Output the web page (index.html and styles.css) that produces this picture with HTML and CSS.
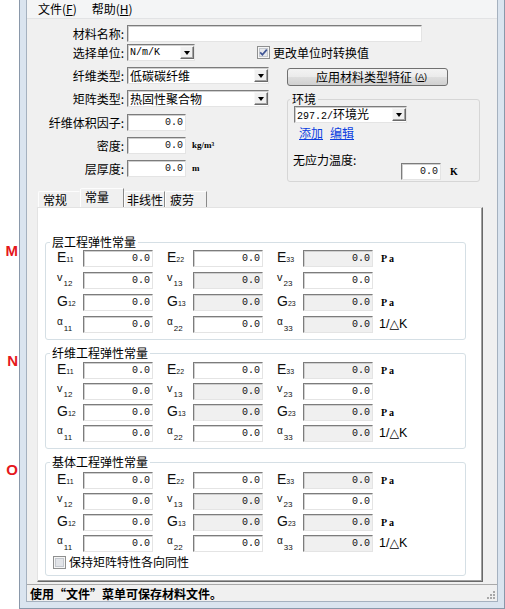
FILE: index.html
```html
<!DOCTYPE html>
<html>
<head>
<meta charset="utf-8">
<link rel="stylesheet" href="styles.css">
</head>
<body>
<div class="page">
  <div class="gutter">
    <div class="mark mark-m">M</div>
    <div class="mark mark-n">N</div>
    <div class="mark mark-o">O</div>
  </div>
  <div class="window">
    <div class="client">
      <div class="menubar">
        <span class="menu">文件(<u>F</u>)</span>
        <span class="menu">帮助(<u>H</u>)</span>
      </div>

      <div class="form">
        <div class="row">
          <span class="lbl">材料名称:</span>
          <div class="field w-name"></div>
        </div>
        <div class="row r2">
          <span class="lbl">选择单位:</span>
          <div class="select w-unit"><span class="mono">N/m/K</span><span class="drop"></span></div>
          <svg class="cb cb-unit" width="13" height="13" viewBox="0 0 13 13"><rect x="0.5" y="0.5" width="12" height="12" fill="#f6f6f6" stroke="#8e8f8f"/><rect x="2.5" y="2.5" width="8" height="8" fill="#e6e8ec" stroke="#c4c8ce"/><path d="M3.2 6.4 L5.4 8.8 L9.8 3.6" fill="none" stroke="#3f5595" stroke-width="1.7"/></svg>
          <span class="cb-text">更改单位时转换值</span>
        </div>

        <div class="split">
          <div class="leftcol">
            <div class="row">
              <span class="lbl">纤维类型:</span>
              <div class="select w-type"><span>低碳碳纤维</span><span class="drop"></span></div>
            </div>
            <div class="row">
              <span class="lbl">矩阵类型:</span>
              <div class="select w-type"><span>热固性聚合物</span><span class="drop"></span></div>
            </div>
            <div class="row r-vol">
              <span class="lbl">纤维体积因子:</span>
              <div class="field w-num num">0.0</div>
            </div>
            <div class="row">
              <span class="lbl">密度:</span>
              <div class="field w-num num">0.0</div>
              <span class="unit-s">kg/m³</span>
            </div>
            <div class="row">
              <span class="lbl">层厚度:</span>
              <div class="field w-num num">0.0</div>
              <span class="unit-s">m</span>
            </div>
          </div>

          <div class="rightcol">
            <button class="btn">应用材料类型特征<span class="acc">(<u>A</u>)</span></button>
            <fieldset class="env">
              <legend>环境</legend>
              <div class="env-body">
                <div class="select w-env"><span><span class="mono">297.2/</span>环境光</span><span class="drop"></span></div>
                <div class="links"><a class="link">添加</a><a class="link link2">编辑</a></div>
                <div class="temp">
                  <span class="temp-lbl">无应力温度:</span>
                  <div class="field w-temp num">0.0</div>
                  <span class="temp-unit">K</span>
                </div>
              </div>
            </fieldset>
          </div>
        </div>
      </div>

      <div class="tabs">
        <div class="tab t1">常规</div>
        <div class="tab t2 active">常量</div>
        <div class="tab t3">非线性</div>
        <div class="tab t4">疲劳</div>
      </div>

      <div class="panel">
        <fieldset class="grp grp-m">
          <legend>层工程弹性常量</legend>
          <div class="grp-body">
            <div class="crow">
              <span class="lab"><span class="big">E</span><span class="sb">11</span></span><div class="field cf num">0.0</div>
              <span class="lab"><span class="big">E</span><span class="sb">22</span></span><div class="field cf num">0.0</div>
              <span class="lab"><span class="big">E</span><span class="sb">33</span></span><div class="field cf num dis">0.0</div>
              <span class="unit-pa">Pa</span>
            </div>
            <div class="crow">
              <span class="lab"><span class="nu">v</span><span class="sb2">12</span></span><div class="field cf num">0.0</div>
              <span class="lab"><span class="nu">v</span><span class="sb2">13</span></span><div class="field cf num dis">0.0</div>
              <span class="lab"><span class="nu">v</span><span class="sb2">23</span></span><div class="field cf num">0.0</div>
            </div>
            <div class="crow">
              <span class="lab"><span class="big">G</span><span class="sb">12</span></span><div class="field cf num">0.0</div>
              <span class="lab"><span class="big">G</span><span class="sb">13</span></span><div class="field cf num dis">0.0</div>
              <span class="lab"><span class="big">G</span><span class="sb">23</span></span><div class="field cf num dis">0.0</div>
              <span class="unit-pa">Pa</span>
            </div>
            <div class="crow">
              <span class="lab"><span class="al">α</span><span class="sb2">11</span></span><div class="field cf num">0.0</div>
              <span class="lab"><span class="al">α</span><span class="sb2">22</span></span><div class="field cf num">0.0</div>
              <span class="lab"><span class="al">α</span><span class="sb2">33</span></span><div class="field cf num dis">0.0</div>
              <span class="unit-k">1/△K</span>
            </div>
          </div>
        </fieldset>

        <fieldset class="grp grp-n">
          <legend>纤维工程弹性常量</legend>
          <div class="grp-body">
            <div class="crow">
              <span class="lab"><span class="big">E</span><span class="sb">11</span></span><div class="field cf num">0.0</div>
              <span class="lab"><span class="big">E</span><span class="sb">22</span></span><div class="field cf num">0.0</div>
              <span class="lab"><span class="big">E</span><span class="sb">33</span></span><div class="field cf num dis">0.0</div>
              <span class="unit-pa">Pa</span>
            </div>
            <div class="crow">
              <span class="lab"><span class="nu">v</span><span class="sb2">12</span></span><div class="field cf num">0.0</div>
              <span class="lab"><span class="nu">v</span><span class="sb2">13</span></span><div class="field cf num dis">0.0</div>
              <span class="lab"><span class="nu">v</span><span class="sb2">23</span></span><div class="field cf num">0.0</div>
            </div>
            <div class="crow">
              <span class="lab"><span class="big">G</span><span class="sb">12</span></span><div class="field cf num">0.0</div>
              <span class="lab"><span class="big">G</span><span class="sb">13</span></span><div class="field cf num dis">0.0</div>
              <span class="lab"><span class="big">G</span><span class="sb">23</span></span><div class="field cf num dis">0.0</div>
              <span class="unit-pa">Pa</span>
            </div>
            <div class="crow">
              <span class="lab"><span class="al">α</span><span class="sb2">11</span></span><div class="field cf num">0.0</div>
              <span class="lab"><span class="al">α</span><span class="sb2">22</span></span><div class="field cf num">0.0</div>
              <span class="lab"><span class="al">α</span><span class="sb2">33</span></span><div class="field cf num dis">0.0</div>
              <span class="unit-k">1/△K</span>
            </div>
          </div>
        </fieldset>

        <fieldset class="grp grp-o">
          <legend>基体工程弹性常量</legend>
          <div class="grp-body">
            <div class="crow">
              <span class="lab"><span class="big">E</span><span class="sb">11</span></span><div class="field cf num">0.0</div>
              <span class="lab"><span class="big">E</span><span class="sb">22</span></span><div class="field cf num">0.0</div>
              <span class="lab"><span class="big">E</span><span class="sb">33</span></span><div class="field cf num dis">0.0</div>
              <span class="unit-pa">Pa</span>
            </div>
            <div class="crow">
              <span class="lab"><span class="nu">v</span><span class="sb2">12</span></span><div class="field cf num">0.0</div>
              <span class="lab"><span class="nu">v</span><span class="sb2">13</span></span><div class="field cf num dis">0.0</div>
              <span class="lab"><span class="nu">v</span><span class="sb2">23</span></span><div class="field cf num">0.0</div>
            </div>
            <div class="crow">
              <span class="lab"><span class="big">G</span><span class="sb">12</span></span><div class="field cf num">0.0</div>
              <span class="lab"><span class="big">G</span><span class="sb">13</span></span><div class="field cf num dis">0.0</div>
              <span class="lab"><span class="big">G</span><span class="sb">23</span></span><div class="field cf num dis">0.0</div>
              <span class="unit-pa">Pa</span>
            </div>
            <div class="crow">
              <span class="lab"><span class="al">α</span><span class="sb2">11</span></span><div class="field cf num">0.0</div>
              <span class="lab"><span class="al">α</span><span class="sb2">22</span></span><div class="field cf num">0.0</div>
              <span class="lab"><span class="al">α</span><span class="sb2">33</span></span><div class="field cf num dis">0.0</div>
              <span class="unit-k">1/△K</span>
            </div>
            <div class="iso">
              <svg class="cb" width="13" height="13" viewBox="0 0 13 13"><rect x="0.5" y="0.5" width="12" height="12" fill="#f6f6f6" stroke="#8e8f8f"/><rect x="2.5" y="2.5" width="8" height="8" fill="#e2e4e8" stroke="#c4c8ce"/></svg>
              <span class="iso-text">保持矩阵特性各向同性</span>
            </div>
          </div>
        </fieldset>
      </div>

      <div class="status">
        <span class="status-text">使用“文件”菜单可保存材料文件。</span>
        <svg class="grip" width="10" height="10" viewBox="0 0 10 10">
          <rect x="7" y="1" width="2" height="2" fill="#a8a8a8"/>
          <rect x="4" y="4" width="2" height="2" fill="#a8a8a8"/>
          <rect x="7" y="4" width="2" height="2" fill="#a8a8a8"/>
          <rect x="1" y="7" width="2" height="2" fill="#a8a8a8"/>
          <rect x="4" y="7" width="2" height="2" fill="#a8a8a8"/>
          <rect x="7" y="7" width="2" height="2" fill="#a8a8a8"/>
        </svg>
      </div>
    </div>
  </div>
</div>
</body>
</html>
```

FILE: styles.css
```css
* { box-sizing: border-box; }
html, body { margin: 0; padding: 0; }
body {
  width: 505px;
  height: 609px;
  overflow: hidden;
  background: #fff;
  font-family: "Noto Sans CJK SC", "Liberation Sans", sans-serif;
  font-size: 12px;
  color: #000;
}
.page { display: flex; height: 609px; }

.gutter {
  width: 19px;
  flex: none;
  display: flex;
  flex-direction: column;
  align-items: flex-end;
  padding-right: 1px;
}
.mark {
  font-family: "Liberation Sans", Arial, sans-serif;
  font-weight: bold;
  font-size: 15px;
  line-height: 15px;
  color: #e5171c;
}
.mark-m { margin-top: 243px; }
.mark-n { margin-top: 95px; }
.mark-o { margin-top: 94px; }

.window {
  width: 486px;
  height: 609px;
  flex: none;
  background: #dae4ef;
  border: 1px solid #8a98aa;
  border-top: none;
  padding: 0 6px 6px;
}
.client {
  height: 602px;
  border: 1px solid #a5b1bf;
  border-top: none;
  background: #f0f0f0;
  display: flex;
  flex-direction: column;
}

/* menu */
.menubar {
  height: 19px;
  flex: none;
  display: flex;
  align-items: center;
  gap: 15px;
  padding-left: 11px;
  background: #f4f5f6;
  border-bottom: 1px solid #e2e3e5;
  line-height: 18px;
}

/* form */
.form { padding-top: 6px; flex: none; }
.row { display: flex; align-items: center; height: 17px; }
.r2 { margin-top: 2px; }
.lbl {
  width: 97px;
  flex: none;
  margin-right: 3px;
  text-align: right;
  line-height: 17px;
  white-space: nowrap;
}
.field {
  height: 17px;
  flex: none;
  background: #fff;
  border: 1px solid;
  border-color: #7c7c7c #e4e4e4 #e4e4e4 #7c7c7c;
  box-shadow: inset 1px 1px 0 #cfcfcf;
}
.num {
  display: flex;
  align-items: center;
  justify-content: flex-end;
  padding-right: 2px;
  font-family: "Liberation Mono", monospace;
  font-size: 10px;
  line-height: 15px;
  color: #111;
}
.dis { background: #f0f0f0; }
.w-name { width: 295px; }
.w-num { width: 59px; }
.w-temp { width: 40px; }

.select {
  height: 17px;
  flex: none;
  display: flex;
  align-items: center;
  justify-content: space-between;
  padding-left: 2px;
  background: #fff;
  border: 1px solid;
  border-color: #7c7c7c #e4e4e4 #e4e4e4 #7c7c7c;
  box-shadow: inset 1px 1px 0 #cfcfcf;
  line-height: 15px;
  white-space: nowrap;
}
.w-unit { width: 68px; }
.w-type { width: 142px; }
.w-env { width: 113px; }
.mono { font-family: "Liberation Mono", monospace; font-size: 10px; }
.drop {
  width: 14px;
  height: 13px;
  flex: none;
  display: flex;
  align-items: center;
  justify-content: center;
  background: #f0f0f0;
  border: 1px solid;
  border-color: #f8f8f8 #6a6a6a #6a6a6a #f8f8f8;
  box-shadow: inset -1px -1px 0 #a3a3a3;
}
.drop::after {
  content: "";
  width: 0;
  height: 0;
  border-left: 3.5px solid transparent;
  border-right: 3.5px solid transparent;
  border-top: 4px solid #000;
}

.cb { flex: none; display: block; }
.cb-unit { margin-left: 62px; }
.cb-text { margin-left: 3px; line-height: 17px; white-space: nowrap; }

.unit-s {
  margin-left: 6px;
  font-family: "Liberation Serif", serif;
  font-weight: bold;
  font-size: 9px;
  line-height: 17px;
}

.split { display: flex; margin-top: 6px; }
.leftcol {
  width: 260px;
  flex: none;
  display: flex;
  flex-direction: column;
  gap: 6px;
}
.r-vol { margin-top: 1px; }
.rightcol { width: 193px; flex: none; }

.btn {
  display: flex;
  align-items: center;
  justify-content: center;
  width: 161px;
  height: 18px;
  margin: 1px 0 0;
  padding: 0 0 0 8px;
  border: 1px solid #707070;
  border-radius: 3px;
  background: linear-gradient(#f3f3f3 0%, #ebebeb 48%, #dedede 52%, #d0d0d0 100%);
  font-family: "Noto Sans CJK SC", sans-serif;
  font-size: 12px;
  line-height: 16px;
  color: #000;
}
.acc {
  margin-left: 3px;
  font-family: "Liberation Sans", sans-serif;
  font-size: 9px;
}

.env {
  width: 193px;
  margin: 6px 0 0;
  padding: 0;
  min-inline-size: 0;
  border: 1px solid #d6d6d6;
  border-radius: 3px;
}
.env legend {
  padding: 0 2px;
  margin-left: 2px;
  line-height: 14px;
}
.env-body { padding: 0 6px 1px 6px; }
.links { display: flex; margin-top: 3px; line-height: 14px; }
.link { color: #0b3ee0; text-decoration: underline; margin-left: 5px; }
.link2 { margin-left: 7px; }
.temp { display: flex; align-items: flex-start; margin-top: 13px; }
.temp-lbl { width: 107px; flex: none; margin-left: -1px; line-height: 14px; white-space: nowrap; }
.w-temp { margin-top: 10px; margin-left: 1px; }
.temp-unit {
  margin-top: 10px;
  margin-left: 9px;
  font-family: "Liberation Serif", serif;
  font-weight: bold;
  font-size: 10px;
  line-height: 17px;
}

/* tabs */
.tabs {
  display: flex;
  align-items: flex-end;
  height: 19px;
  margin: 6px 0 0 11px;
  flex: none;
}
.tab {
  height: 16px;
  padding-left: 4px;
  line-height: 15px;
  border-top: 1px solid #fdfdfd;
  border-left: 1px solid #fdfdfd;
  border-right: 1px solid #8a8a8a;
  border-top-left-radius: 2px;
  white-space: nowrap;
}
.t1 { width: 42px; border-right-color: transparent; }
.t2 { width: 44px; }
.t3 { width: 41px; padding-left: 2px; }
.t4 { width: 42px; }
.tab.active {
  height: 19px;
  line-height: 16px;
  padding-left: 4px;
  border-left-color: #ffffff;
}

/* panel */
.panel {
  margin-left: 10px;
  width: 446px;
  height: 375px;
  flex: none;
  background: #fff;
  border: 1px solid;
  border-color: #e3e3e3 #696969 #696969 #e3e3e3;
  box-shadow: inset -1px -1px 0 #a0a0a0;
  padding: 27px 0 0 7px;
}
.grp {
  width: 421px;
  margin: 0;
  padding: 0;
  min-inline-size: 0;
  border: 1px solid #d5dfe5;
  border-radius: 3px;
}
.grp legend {
  padding: 0 2px;
  margin-left: 4px;
  line-height: 14px;
}
.grp-body {
  display: flex;
  flex-direction: column;
  gap: 4px;
  padding: 0 0 6px 11px;
}
.grp-m .grp-body { gap: 5px; padding-top: 1px; }
.grp-n { margin-top: 6px; }
.grp-n .grp-body { padding-top: 2px; }
.grp-o { margin-top: 6px; }
.grp-o .grp-body { padding-top: 3px; }

.crow { display: flex; align-items: center; height: 17px; }
.cf { width: 70px; }
.lab {
  width: 26px;
  flex: none;
  margin-left: 14px;
  font-family: "Liberation Sans", Arial, sans-serif;
  font-size: 14px;
  line-height: 17px;
  white-space: nowrap;
  color: #111;
}
.lab:first-child { margin-left: 0; }
.big { font-size: 14px; }
.sb { font-size: 7px; }
.nu { font-size: 11px; vertical-align: 5px; }
.al { font-size: 10px; vertical-align: 6px; }
.sb2 { font-size: 8px; margin-left: 1px; }
.unit-pa {
  margin-left: 8px;
  font-family: "Liberation Serif", serif;
  font-weight: bold;
  font-size: 10px;
  letter-spacing: 2px;
  line-height: 17px;
}
.unit-k {
  margin-left: 6px;
  font-family: "Liberation Sans", "DejaVu Sans", sans-serif;
  font-size: 12.5px;
  line-height: 17px;
  white-space: nowrap;
}
.iso {
  display: flex;
  align-items: center;
  height: 14px;
  margin-top: -1px;
  margin-left: -4px;
}
.iso-text { margin-left: 3px; line-height: 14px; white-space: nowrap; }

/* status */
.status {
  flex: 1;
  margin-top: 2px;
  border-top: 1px solid #a9a9a9;
  display: flex;
  align-items: center;
  padding-left: 3px;
  padding-right: 1px;
}
.status-text { font-weight: bold; line-height: 15px; white-space: nowrap; }
.grip { margin-left: auto; margin-top: 4px; display: block; }
```
